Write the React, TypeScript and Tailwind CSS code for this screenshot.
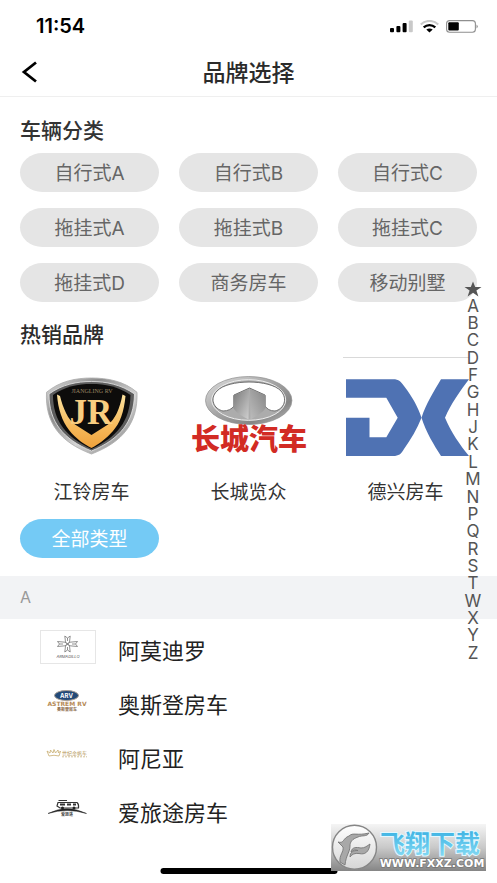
/**
 * Brand picker - vehicle types, hot brands and the A-Z brand list
 */

import type { ReactNode } from 'react';
import clsx from 'clsx';

const vehicleTypes = [
  '自行式A',
  '自行式B',
  '自行式C',
  '拖挂式A',
  '拖挂式B',
  '拖挂式C',
  '拖挂式D',
  '商务房车',
  '移动别墅',
];

const indexLetters = 'ABCDFGHJKLMNPQRSTWXYZ'.split('');

const cjk = "'Noto Sans CJK SC', sans-serif";

interface Brand {
  name: string;
  logo: ReactNode;
}

function StatusBar() {
  return (
    <div className="flex h-12 items-center justify-between pt-1 pr-[19px] pl-9 text-black">
      <time className="text-xl font-semibold">11:54</time>
      <div className="flex items-center gap-[7px]">
        <svg width="23" height="13" viewBox="0 0 23 13" aria-hidden="true">
          <rect x="0" y="8" width="4" height="4.3" rx="1" />
          <rect x="6.4" y="6" width="4" height="6.3" rx="1" />
          <rect x="12.6" y="3" width="4" height="9.3" rx="1" />
          <rect x="18.8" y="0.4" width="4" height="11.9" rx="1" fill="#c9c9c9" />
        </svg>
        <svg width="19" height="13" viewBox="0 0 19 13" fill="none" aria-hidden="true">
          <path d="M.8 4.6C5.5-.2 13.5-.2 18.2 4.6" stroke="#c9c9c9" strokeWidth="2.2" />
          <path d="M3.7 7.4C7 4.3 12 4.3 15.3 7.4" stroke="#000" strokeWidth="2.2" />
          <path d="M6.3 9.6Q9.5 7.4 12.7 9.6L9.5 12.4z" fill="#000" />
        </svg>
        <svg width="32" height="13" viewBox="0 0 32 13" aria-hidden="true">
          <rect x="0.6" y="0.6" width="28.8" height="11.6" rx="3" fill="none" stroke="#8f8f8f" strokeWidth="1.1" />
          <rect x="2.3" y="2.3" width="10.5" height="8.2" rx="1" />
          <path d="M30.5 4.5Q33 6.4 30.5 8.4z" fill="#8f8f8f" />
        </svg>
      </div>
    </div>
  );
}

function Header() {
  return (
    <header className="grid h-[49px] grid-cols-[1fr_auto_1fr] items-center border-b border-[#efefef] px-5">
      <button type="button" aria-label="返回" className="flex h-10 w-10 items-center">
        <svg width="20" height="24" viewBox="0 0 20 24" fill="none" aria-hidden="true">
          <path d="M16 2.5 4 12l12 9.5" stroke="#000" strokeWidth="2.8" />
        </svg>
      </button>
      <h1 className="pt-[2px] text-[23px] leading-8 font-medium text-[#2b2b2b]">品牌选择</h1>
    </header>
  );
}

function Pill({ label, active }: { label: string; active?: boolean }) {
  return (
    <button
      type="button"
      className={clsx(
        'h-[39px] pt-[3px] text-[19px] leading-8 [border-radius:23px/20px]',
        active ? 'bg-[#74caf5] text-white' : 'bg-[#e5e5e5] text-[#666]'
      )}
    >
      {label}
    </button>
  );
}

function JianglingLogo() {
  return (
    <svg width="126" height="118" viewBox="0 0 126 118" aria-hidden="true">
      <defs>
        <linearGradient id="chrome" x1="0" y1="0" x2="1" y2="1">
          <stop offset="0" stopColor="#e2e2e2" />
          <stop offset="0.3" stopColor="#8c8c8c" />
          <stop offset="0.6" stopColor="#d4d4d4" />
          <stop offset="1" stopColor="#777" />
        </linearGradient>
        <linearGradient id="gold" x1="0" y1="0" x2="0" y2="1">
          <stop offset="0" stopColor="#fde39f" />
          <stop offset="0.6" stopColor="#f6b95a" />
          <stop offset="1" stopColor="#efa23c" />
        </linearGradient>
      </defs>
      <path
        d="M17.5 35.3C31 24 47 21 62.5 21S95 24 108 35.3C109 66 94 85 62.5 97 31 85 16 66 17.5 35.3z"
        fill="url(#chrome)"
        stroke="#aaa"
        strokeWidth="0.8"
      />
      <path
        d="M20 37C33 27.5 48 24.5 62.5 24.5S92 27.5 105.500 37C105 65 91 82 62.500 94 34 82 20 65 20 37z"
        fill="#5d5d5d"
        stroke="#e8e8e8"
        strokeWidth="0.8"
      />
      <path
        d="M24 38C36 29.5 49 27 62.5 27S89 29.5 101.5 38C101 64 88 80 62.5 92 37 80 24 64 24 38z"
        fill="#0d0c0b"
      />
      <path
        d="M28 37.500 31 39C34 51 39 63 46 67.500L62.500 78 79 67.500C86 63 91 51 93.500 37.500L96.500 39C95 55 91 66 84 74 77 82 70 87 62.500 91 55 87 47 82 40 73 33 64 29 52 28 37.500z"
        fill="url(#gold)"
      />
      <text x="63" y="36" textAnchor="middle" fontFamily="'Liberation Serif', serif" fontSize="6" fill="#9a8562">
        JIANGLING RV
      </text>
      <text x="62" y="67" textAnchor="middle" fontFamily="'Liberation Serif', serif" fontWeight="700" fontSize="35" fill="#f8cd80">
        JR
      </text>
    </svg>
  );
}

function GreatWallLogo() {
  return (
    <svg width="126" height="118" viewBox="0 0 126 118" aria-hidden="true">
      <defs>
        <linearGradient id="ring" x1="0" y1="0" x2="1" y2="1">
          <stop offset="0" stopColor="#e0e0e0" />
          <stop offset="0.45" stopColor="#a5a5a5" />
          <stop offset="0.75" stopColor="#858585" />
          <stop offset="1" stopColor="#c4c4c4" />
        </linearGradient>
        <linearGradient id="towerLeft" x1="0" y1="0" x2="1" y2="1">
          <stop offset="0" stopColor="#777" />
          <stop offset="1" stopColor="#d0d0d0" />
        </linearGradient>
        <linearGradient id="towerRight" x1="1" y1="0" x2="0" y2="1">
          <stop offset="0" stopColor="#858585" />
          <stop offset="1" stopColor="#bdbdbd" />
        </linearGradient>
      </defs>
      <ellipse cx="62.7" cy="43.5" rx="43.2" ry="24" fill="url(#ring)" stroke="#8c8c8c" strokeWidth="0.7" />
      <ellipse cx="62.7" cy="43" rx="37" ry="20.3" fill="#acacac" stroke="#efefef" strokeWidth="1" />
      <path
        d="M37 54C28 52 23 42 31 34 42 22 84 22 95 34 102 42 98 52 89 54 84 54 81 52 79 49L79 38 63.5 31 48 38 48 49C46 52 42 54 37 54z"
        fill="#fff"
        stroke="#707070"
        strokeWidth="1"
      />
      <path d="M63 32 47.3 38.5V51C51 57 58 60 62.5 62.5z" fill="url(#towerLeft)" />
      <path d="M64 32 79.7 38.5V51C76 57 68 60 64.5 62.5z" fill="url(#towerRight)" />
      <text x="63" y="93" textAnchor="middle" fontFamily={cjk} fontWeight="900" fontSize="29" fill="#d22b24">
        长城汽车
      </text>
    </svg>
  );
}

function DexingLogo() {
  return (
    <svg width="126" height="118" viewBox="0 0 126 118" aria-hidden="true">
      <path d="M0 .5H126" stroke="#d9d9d9" />
      <path
        d="M3 22.3H50C56 22.3 58 25 61 29 70 41 75 50 78.5 60.7 74 72 68 82 61 92 58 97 56 99 50 99H3V60.7H26.5V80.3H43.3L54.7 60.7 43.3 40.7H3z"
        fill="#4f72b3"
      />
      <path d="M98 22.3H126C117 34 108 47 102 60.7 108 75 117 88 126 99H98C91 88 83 75 78.5 60.7 83 47 91 34 98 22.3z" fill="#4f72b3" />
    </svg>
  );
}

function ArmadilloLogo() {
  return (
    <svg width="56" height="34" viewBox="0 0 56 34" className="outline -outline-offset-1 outline-[#e6e6e6]" aria-hidden="true">
      <g fill="none" stroke="#777" strokeWidth="0.8">
        <path d="M27.5 14 25.500 12 24.800 6 27.500 8 30.200 6 29.500 12z" />
        <path d="M27.500 14 29.500 16 30.200 22 27.500 20 24.800 22 25.500 16z" />
        <path d="M27.500 14 25 15.800 17.500 16.500 19.500 14 17.500 11.500 25 12.200z" />
        <path d="M27.500 14 30 12.200 37.500 11.500 35.500 14 37.500 16.500 30 15.800z" />
        <path d="M27.500 8V11M27.500 17V20M19.500 14H23M32 14H35.500" />
      </g>
      <text x="28" y="27.5" textAnchor="middle" fontFamily="Inter, sans-serif" fontStyle="italic" fontSize="4" fill="#555">
        ARMADILLO
      </text>
    </svg>
  );
}

function AstremLogo() {
  return (
    <svg width="56" height="34" viewBox="0 0 56 34" aria-hidden="true">
      <ellipse cx="26.5" cy="11.5" rx="12" ry="5" fill="#234a78" stroke="#aaa095" strokeWidth="1" />
      <text x="26.5" y="13.8" textAnchor="middle" fontFamily="Inter, sans-serif" fontWeight="700" fontSize="6" fill="#fff">
        ARV
      </text>
      <text x="27" y="21.5" textAnchor="middle" fontFamily="'DejaVu Sans', sans-serif" fontWeight="700" fontSize="6" fill="#b58a55">
        ASTREM RV
      </text>
      <text x="27" y="26.5" textAnchor="middle" fontFamily={cjk} fontWeight="700" fontSize="4" fill="#8c6a48">
        奥斯登房车
      </text>
    </svg>
  );
}

function AniyaLogo() {
  return (
    <svg width="56" height="34" viewBox="0 0 56 34" aria-hidden="true">
      <path
        d="M9 18 7 13 10 15 10.500 12 13 15 14 11.500 15.500 15 18 12 18.500 15 20.500 13 19 18Q14 16.500 9 18z"
        fill="none"
        stroke="#c8ad70"
        strokeWidth="0.8"
      />
      <text x="22" y="17" fontFamily={cjk} fontSize="5" fill="#b79a5b">
        世纪金帆车
      </text>
      <path d="M22 18.8H47" stroke="#d3c198" strokeDasharray="2 1" />
    </svg>
  );
}

function AilvtuLogo() {
  return (
    <svg width="56" height="34" viewBox="0 0 56 34" aria-hidden="true">
      <path d="M8 21.5Q27 12 46.5 21.5 27 15.5 8 21.5z" fill="#222" stroke="#222" strokeWidth="0.5" />
      <path d="M18 10.5H37Q39 12 38.5 16H20L17 14zM18.5 8.5H27" fill="#fff" stroke="#333" strokeWidth="1.2" />
      <path d="M20 12.5H25M27 12.5H31M33 12.5H36" stroke="#333" strokeWidth="1.8" />
      <circle cx="22.5" cy="16" r="1.5" fill="#222" />
      <circle cx="34" cy="16" r="1.5" fill="#222" />
      <text x="27" y="23.5" textAnchor="middle" fontFamily={cjk} fontWeight="700" fontSize="4" fill="#444">
        爱旅途
      </text>
    </svg>
  );
}

const hotBrands: Brand[] = [
  { name: '江铃房车', logo: <JianglingLogo /> },
  { name: '长城览众', logo: <GreatWallLogo /> },
  { name: '德兴房车', logo: <DexingLogo /> },
];

const brands: Brand[] = [
  { name: '阿莫迪罗', logo: <ArmadilloLogo /> },
  { name: '奥斯登房车', logo: <AstremLogo /> },
  { name: '阿尼亚', logo: <AniyaLogo /> },
  { name: '爱旅途房车', logo: <AilvtuLogo /> },
];

function IndexBar() {
  return (
    <nav
      aria-label="索引"
      className="absolute top-[280px] right-3 grid h-[382px] w-6 auto-rows-fr place-items-center text-[17px] leading-none text-[#555]"
    >
      <a href="#hot" aria-label="热销品牌">
        <svg width="18" height="16" viewBox="0 0 18 16" aria-hidden="true">
          <path d="M9 .5 11.200 6H17.500L12.400 9.400 14.400 15.500 9 11.700 3.600 15.500 5.600 9.400.5 6H6.800z" fill="#555" />
        </svg>
      </a>
      {indexLetters.map((letter) => (
        <a key={letter} href={`#${letter}`}>
          {letter}
        </a>
      ))}
    </nav>
  );
}

function Watermark() {
  return (
    <svg width="155" height="47" viewBox="0 0 155 47" className="absolute right-[11px] bottom-3" aria-hidden="true">
      <defs>
        <linearGradient id="plate" x1="0" y1="0" x2="0" y2="1">
          <stop offset="0" stopColor="#f5f5f5" />
          <stop offset="0.5" stopColor="#c9c9c9" />
          <stop offset="1" stopColor="#858585" />
        </linearGradient>
        <linearGradient id="disc" x1="0" y1="0" x2="0" y2="1">
          <stop offset="0" stopColor="#fff" />
          <stop offset="1" stopColor="#d6d6d6" />
        </linearGradient>
        <linearGradient id="sky" x1="0" y1="0" x2="0" y2="1">
          <stop offset="0.2" stopColor="#3fb4e4" />
          <stop offset="1" stopColor="#8edff5" />
        </linearGradient>
      </defs>
      <rect width="155" height="47" fill="url(#plate)" />
      <circle cx="23.5" cy="23.3" r="22" fill="url(#disc)" stroke="#868686" strokeWidth="1.4" />
      <g fill="#a8a8a8" stroke="#777" strokeWidth="0.9" strokeLinejoin="round">
        <path d="M38 9C36 13 31 11 27 13 21 15 19 18 19 22 19 28 15 31 14 41L9 38C8 31 13 28 12 23L7 18C13 20 12 14 18 12 22 8 26 12 38 9z" />
        <path d="M39 20C38 28 34 31 28 29.500 24 29 21 30 19 33 19 28 22 26.500 27 26.500 24 25.500 22 26 20 28 21 23 25 23 30 24 34 24 36 22 39 20z" />
      </g>
      <text
        x="99"
        y="29"
        textAnchor="middle"
        fontFamily={cjk}
        fontWeight="700"
        fontSize="25"
        fill="url(#sky)"
        stroke="#e3f8ff"
        strokeWidth="2"
        paintOrder="stroke"
      >
        飞翔下载
      </text>
      <text
        x="101"
        y="43"
        textAnchor="middle"
        fontFamily="'DejaVu Sans', sans-serif"
        fontWeight="700"
        fontSize="11"
        fill="#fff"
        stroke="#777"
        strokeWidth="1.5"
        paintOrder="stroke"
      >
        WWW.FXXZ.COM
      </text>
    </svg>
  );
}

export default function App() {
  return (
    <div className="relative min-h-screen bg-white font-[Inter,'Noto_Sans_CJK_SC',sans-serif]">
      <StatusBar />
      <Header />

      <main>
        <section className="px-5 pt-[18px]">
          <h2 className="text-[21px] leading-8 font-medium text-[#333]">车辆分类</h2>
          <div className="mt-[6px] grid grid-cols-3 gap-x-5 gap-y-4">
            {vehicleTypes.map((type) => (
              <Pill key={type} label={type} />
            ))}
          </div>
        </section>

        <section id="hot" className="pt-[17px]">
          <h2 className="px-5 text-[21px] leading-8 font-medium text-[#2b2b2b]">热销品牌</h2>
          <div className="mt-[6px] grid grid-cols-3 px-[13px]">
            {hotBrands.map((brand) => (
              <button key={brand.name} type="button" className="flex flex-col items-center gap-[2px]">
                {brand.logo}
                <span className="text-[19px] leading-8 text-[#333]">{brand.name}</span>
              </button>
            ))}
          </div>
          <div className="mt-[10px] grid grid-cols-3 gap-x-5 px-5">
            <Pill label="全部类型" active />
          </div>
        </section>

        <section id="A" className="pt-[18px]">
          <h3 className="bg-[#f2f3f5] px-5 text-base leading-[43px] text-[#999]">A</h3>
          <ul className="px-10 pt-[1px]">
            {brands.map((brand) => (
              <li key={brand.name}>
                <button type="button" className="flex h-[54px] w-full items-center gap-[22px] text-left">
                  {brand.logo}
                  <span className="pt-2 text-[22px] leading-8 text-[#222]">{brand.name}</span>
                </button>
              </li>
            ))}
          </ul>
        </section>
      </main>

      <IndexBar />
      <div className="absolute bottom-[9px] left-1/2 h-[6px] w-[177px] -translate-x-1/2 rounded-full bg-black" />
      <Watermark />
    </div>
  );
}
